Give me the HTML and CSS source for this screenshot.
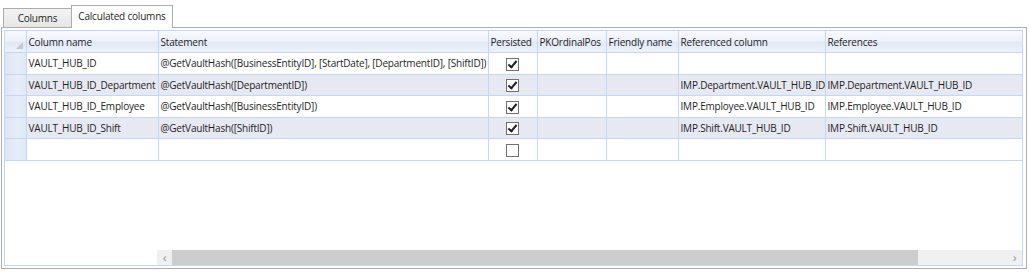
FILE: index.html
```html
<!DOCTYPE html>
<html>
<head>
<meta charset="utf-8">
<link rel="stylesheet" href="styles.css">
</head>
<body>
<div class="tabs">
  <div class="tab">Columns</div>
  <div class="tab active">Calculated columns</div>
</div>
<div class="panel">
  <div class="grid">
    <table class="tbl">
      <colgroup>
        <col class="c-rh"><col class="c-name"><col class="c-stmt"><col class="c-pers"><col class="c-pk"><col class="c-fr"><col class="c-ref"><col>
      </colgroup>
      <thead>
        <tr>
          <th class="rh corner"><span class="tri"></span></th>
          <th>Column name</th>
          <th>Statement</th>
          <th>Persisted</th>
          <th>PKOrdinalPos</th>
          <th>Friendly name</th>
          <th>Referenced column</th>
          <th>References</th>
        </tr>
      </thead>
      <tbody>
        <tr>
          <td class="rh"></td>
          <td>VAULT_HUB_ID</td>
          <td>@GetVaultHash([BusinessEntityID], [StartDate], [DepartmentID], [ShiftID])</td>
          <td class="ck"><span class="box on"></span></td>
          <td></td><td></td><td></td><td></td>
        </tr>
        <tr class="alt">
          <td class="rh"></td>
          <td>VAULT_HUB_ID_Department</td>
          <td>@GetVaultHash([DepartmentID])</td>
          <td class="ck"><span class="box on"></span></td>
          <td></td><td></td>
          <td>IMP.Department.VAULT_HUB_ID</td>
          <td>IMP.Department.VAULT_HUB_ID</td>
        </tr>
        <tr>
          <td class="rh"></td>
          <td>VAULT_HUB_ID_Employee</td>
          <td>@GetVaultHash([BusinessEntityID])</td>
          <td class="ck"><span class="box on"></span></td>
          <td></td><td></td>
          <td>IMP.Employee.VAULT_HUB_ID</td>
          <td>IMP.Employee.VAULT_HUB_ID</td>
        </tr>
        <tr class="alt">
          <td class="rh"></td>
          <td>VAULT_HUB_ID_Shift</td>
          <td>@GetVaultHash([ShiftID])</td>
          <td class="ck"><span class="box on"></span></td>
          <td></td><td></td>
          <td>IMP.Shift.VAULT_HUB_ID</td>
          <td>IMP.Shift.VAULT_HUB_ID</td>
        </tr>
        <tr>
          <td class="rh"></td>
          <td></td>
          <td></td>
          <td class="ck"><span class="box"></span></td>
          <td></td><td></td><td></td><td></td>
        </tr>
      </tbody>
    </table>
    <div class="spacer"></div>
    <div class="hscroll">
      <div class="frozen"></div>
      <div class="sbar">
        <div class="arrow">&#8249;</div>
        <div class="thumb"></div>
        <div class="track"></div>
        <div class="arrow">&#8250;</div>
      </div>
    </div>
  </div>
</div>
<div class="footer">Hash keys</div>
</body>
</html>
```
FILE: styles.css
```css
html, body {
  margin: 0;
  padding: 0;
  background: #ffffff;
  overflow: hidden;
}
body {
  width: 1030px;
  height: 274px;
  font-family: "Open Sans", "Noto Sans", sans-serif;
  font-size: 10px;
  letter-spacing: -0.2px;
  color: #1e1e1e;
}
.tabs {
  display: flex;
  align-items: flex-end;
  height: 27px;
  padding-left: 3px;
}
.tab {
  box-sizing: border-box;
  height: 19px;
  width: 68px;
  border: 1px solid #acacac;
  border-bottom: none;
  border-right: none;
  background: linear-gradient(#f3f3f3, #e6e6e6);
  text-align: center;
  line-height: 19px;
}
.tab.active {
  height: 23px;
  width: 102px;
  background: #ffffff;
  border-right: 1px solid #acacac;
  line-height: 20px;
  position: relative;
  top: 1px;
  z-index: 1;
}
.panel {
  box-sizing: border-box;
  width: 1026px;
  height: 242px;
  margin-left: 1px;
  border: 1px solid #acacac;
  padding: 2px;
  background: #ffffff;
}
.grid {
  box-sizing: border-box;
  height: 100%;
  width: 1019px;
  border: 1px solid #c5d7f2;
  display: flex;
  flex-direction: column;
}
.tbl {
  border-collapse: collapse;
  table-layout: fixed;
  width: 100%;
}
.c-rh { width: 21px; }
.c-name { width: 132px; }
.c-stmt { width: 330px; }
.c-pers { width: 49px; }
.c-pk { width: 69px; }
.c-fr { width: 72px; }
.c-ref { width: 147px; }
.tbl th, .tbl td {
  border-right: 1px solid #c5d7f2;
  border-bottom: 1px solid #c5d7f2;
  padding: 0 0 0 2px;
  white-space: nowrap;
  overflow: hidden;
  text-align: left;
  font-weight: normal;
}
.tbl th:last-child, .tbl td:last-child {
  border-right: none;
}
.tbl thead th {
  height: 21px;
  background: linear-gradient(#f7f9fd 0%, #eef2f9 45%, #e1e8f5 55%, #edf2f9 100%);
}
.tbl tbody td {
  height: 20.6px;
}
.tbl tbody tr.alt td {
  background: #e6e9f1;
}
.tbl td.rh, .tbl tr.alt td.rh, .tbl th.rh {
  padding: 0;
  background: linear-gradient(90deg, #dbe5f5 0%, #e8eef9 60%, #dfe7f6 100%);
  border-right: 1px solid #c5d7f2;
}
.tbl th.corner {
  position: relative;
  background: linear-gradient(#f7f9fd 0%, #eef2f9 45%, #e1e8f5 55%, #edf2f9 100%);
}
.tri {
  position: absolute;
  right: 3px;
  bottom: 3px;
  width: 0;
  height: 0;
  border-left: 7px solid transparent;
  border-bottom: 7px solid #c8c8c8;
}
.tbl td.ck {
  text-align: center;
  padding: 0;
}
.box {
  display: inline-block;
  box-sizing: border-box;
  width: 13px;
  height: 13px;
  border: 1px solid #707070;
  background: #ffffff;
  vertical-align: middle;
  position: relative;
}
.box.on::after {
  content: "";
  position: absolute;
  left: 3px;
  top: 0px;
  width: 3px;
  height: 7px;
  border-right: 2px solid #1e1e1e;
  border-bottom: 2px solid #1e1e1e;
  transform: rotate(40deg);
}
.spacer {
  flex: 1;
}
.hscroll {
  display: flex;
  height: 15px;
}
.frozen {
  width: 152px;
  background: #ffffff;
}
.sbar {
  flex: 1;
  display: flex;
  background: #f0f0f0;
}
.arrow {
  width: 15px;
  color: #9a9a9a;
  font-size: 13px;
  line-height: 14px;
  text-align: center;
}
.thumb {
  width: 746px;
  background: #cdcdcd;
}
.track {
  flex: 1;
}
.footer {
  padding: 5px 0 0 8px;
  font-size: 11px;
  color: #444;
}
```
